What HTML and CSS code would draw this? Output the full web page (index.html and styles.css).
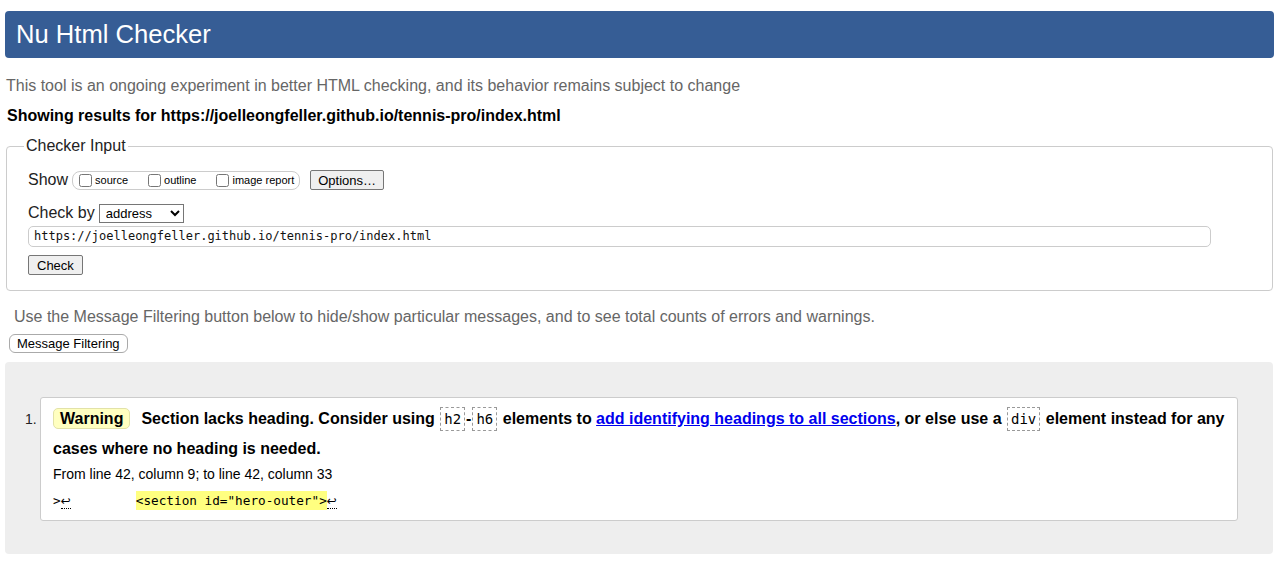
FILE: index.html
```html
<!DOCTYPE html>
<html>
<head>
<meta charset="utf-8">
<title>Nu Html Checker</title>
<link rel="stylesheet" href="styles.css">
</head>
<body>
<h1 class="title">Nu Html Checker</h1>
<p class="intro">This tool is an ongoing experiment in better HTML checking, and its behavior remains subject to change</p>
<p class="result">Showing results for https://joelleongfeller.github.io/tennis-pro/index.html</p>
<fieldset class="checker">
  <legend class="legend">Checker Input</legend>
  <div class="inner">
    <div class="row show-row">
      <span class="lbl">Show</span>
      <span class="show-box">
        <label class="opt"><input type="checkbox" class="cb">source</label>
        <label class="opt"><input type="checkbox" class="cb">outline</label>
        <label class="opt last"><input type="checkbox" class="cb">image report</label>
      </span>
      <button class="btn options">Options…</button>
    </div>
    <div class="row by-row">
      <span class="lbl">Check by</span>
      <select class="sel"><option>address</option></select>
    </div>
    <div class="url">https://joelleongfeller.github.io/tennis-pro/index.html</div>
    <button class="btn check">Check</button>
  </div>
</fieldset>
<p class="filter-note">Use the Message Filtering button below to hide/show particular messages, and to see total counts of errors and warnings.</p>
<button class="btn filter">Message Filtering</button>
<div class="results">
  <ol class="list">
    <li class="msg">
      <p class="msg-text"><span class="badge">Warning</span>Section lacks heading. Consider using <code class="c">h2</code>-<code class="c">h6</code> elements to <a class="link" href="#">add identifying headings to all sections</a>, or else use a <code class="c">div</code> element instead for any cases where no heading is needed.</p>
      <p class="loc">From line 42, column 9; to line 42, column 33</p>
      <p class="extract">&gt;<span class="lf">↩</span><span class="ws">        </span><mark class="hl">&lt;section id="hero-outer"&gt;</mark><span class="lf">↩</span></p>
    </li>
  </ol>
</div>
</body>
</html>
```
FILE: styles.css
```css
html, body {
  margin: 0;
  padding: 0;
  background: #fff;
  font-family: "Liberation Sans", Arial, sans-serif;
  color: #000;
}
.title {
  margin: 11px 9px 0 5px;
  height: 47px;
  line-height: 47px;
  background: #365d95;
  color: #fff;
  font-weight: normal;
  font-size: 25.6px;
  padding: 0 0 0 11px;
  border-radius: 4px;
}
.intro {
  margin: 19px 0 0 6px;
  font-size: 16px;
  line-height: 18px;
  color: #666;
}
.result {
  margin: 12px 0 0 7px;
  font-size: 16px;
  line-height: 18px;
  font-weight: bold;
}
.checker {
  margin: 12px 10px 0 6px;
  padding: 0 0 15px 17px;
  border: 1px solid #ccc;
  border-radius: 4px;
}
.legend {
  padding: 0 2px;
  font-size: 16px;
  line-height: 18px;
  color: #222;
}
.inner {
  padding-left: 4px;
  padding-right: 61px;
}
.row {
  display: flex;
  align-items: center;
}
.show-row {
  margin-top: 15px;
  height: 20px;
}
.lbl {
  font-size: 16px;
  color: #222;
}
.show-box {
  display: flex;
  align-items: center;
  margin-left: 4px;
  height: 17px;
  border: 1px solid #ccc;
  border-radius: 8px;
  padding: 0 5px 0 5px;
}
.opt {
  display: flex;
  align-items: center;
  font-size: 11px;
  white-space: nowrap;
  margin-right: 19px;
}
.opt.last {
  margin-right: 0;
}
.cb {
  width: 13px;
  height: 13px;
  margin: 0 3px 0 1px;
}
.btn {
  font-family: "Liberation Sans", Arial, sans-serif;
  font-size: 13px;
  background: #efefef;
  border: 1px solid #767676;
  border-radius: 2px;
  color: #000;
  padding: 0 7px;
  height: 20px;
}
.options {
  margin-left: 10px;
}
.by-row {
  margin-top: 14px;
  height: 18px;
}
.sel {
  margin-left: 4px;
  width: 85px;
  height: 19px;
  font-family: "Liberation Sans", Arial, sans-serif;
  font-size: 13px;
  border: 1px solid #767676;
  border-radius: 0;
  background: #fff;
  padding: 0 0 0 2px;
}
.url {
  margin-top: 4px;
  height: 19px;
  line-height: 19px;
  border: 1px solid #ccc;
  border-radius: 5px;
  font-family: "DejaVu Sans Mono", monospace;
  font-size: 12px;
  padding-left: 5px;
  color: #111;
}
.check {
  margin-top: 8px;
  padding: 0 8px;
}
.filter-note {
  margin: 17px 0 0 14px;
  font-size: 16px;
  line-height: 18px;
  color: #666;
}
.filter {
  margin: 8px 0 0 9px;
  height: 19px;
  padding: 0 7px;
  background: #fff;
  border: 1px solid #aaa;
  border-radius: 6px;
}
.results {
  margin: 9px 10px 0 5px;
  background: #eee;
  border-radius: 4px;
  padding: 35px 35px 33px 35px;
}
.list {
  margin: 0;
  padding: 0;
  list-style: none;
}
.msg {
  position: relative;
  background: #fff;
  border: 1px solid #ccc;
  border-radius: 3px;
  padding: 6px 6px 9px 12px;
}
.msg::before {
  content: "1.";
  position: absolute;
  left: -16px;
  top: 13px;
  font-size: 14px;
  color: #222;
}
.msg-text {
  margin: 0;
  font-size: 16px;
  line-height: 29px;
  font-weight: bold;
}
.badge {
  display: inline-block;
  background: #ffffc0;
  border: 1px solid #e2e2a8;
  border-radius: 5px;
  padding: 0 6px;
  line-height: 19px;
  margin-right: 11px;
}
.c {
  font-family: "DejaVu Sans Mono", monospace;
  font-weight: normal;
  font-size: 14px;
  border: 1px dashed #999;
  padding: 3px 3px;
  margin: 0 1px;
}
.link {
  color: #0000ee;
  text-decoration: underline;
}
.loc {
  margin: 1px 0 0 0;
  font-size: 14px;
  line-height: 20px;
}
.extract {
  margin: 7px 0 0 0;
  white-space: pre;
  font-family: "DejaVu Sans Mono", monospace;
  font-size: 12.7px;
  line-height: 20px;
}
.ws {
  padding-left: 4px;
}
.lf {
  border-bottom: 1px dotted #000;
  font-family: "DejaVu Sans", sans-serif;
  font-size: 12px;
}
.hl {
  background: #ffff80;
  color: #000;
  padding: 2px 0;
}
```
